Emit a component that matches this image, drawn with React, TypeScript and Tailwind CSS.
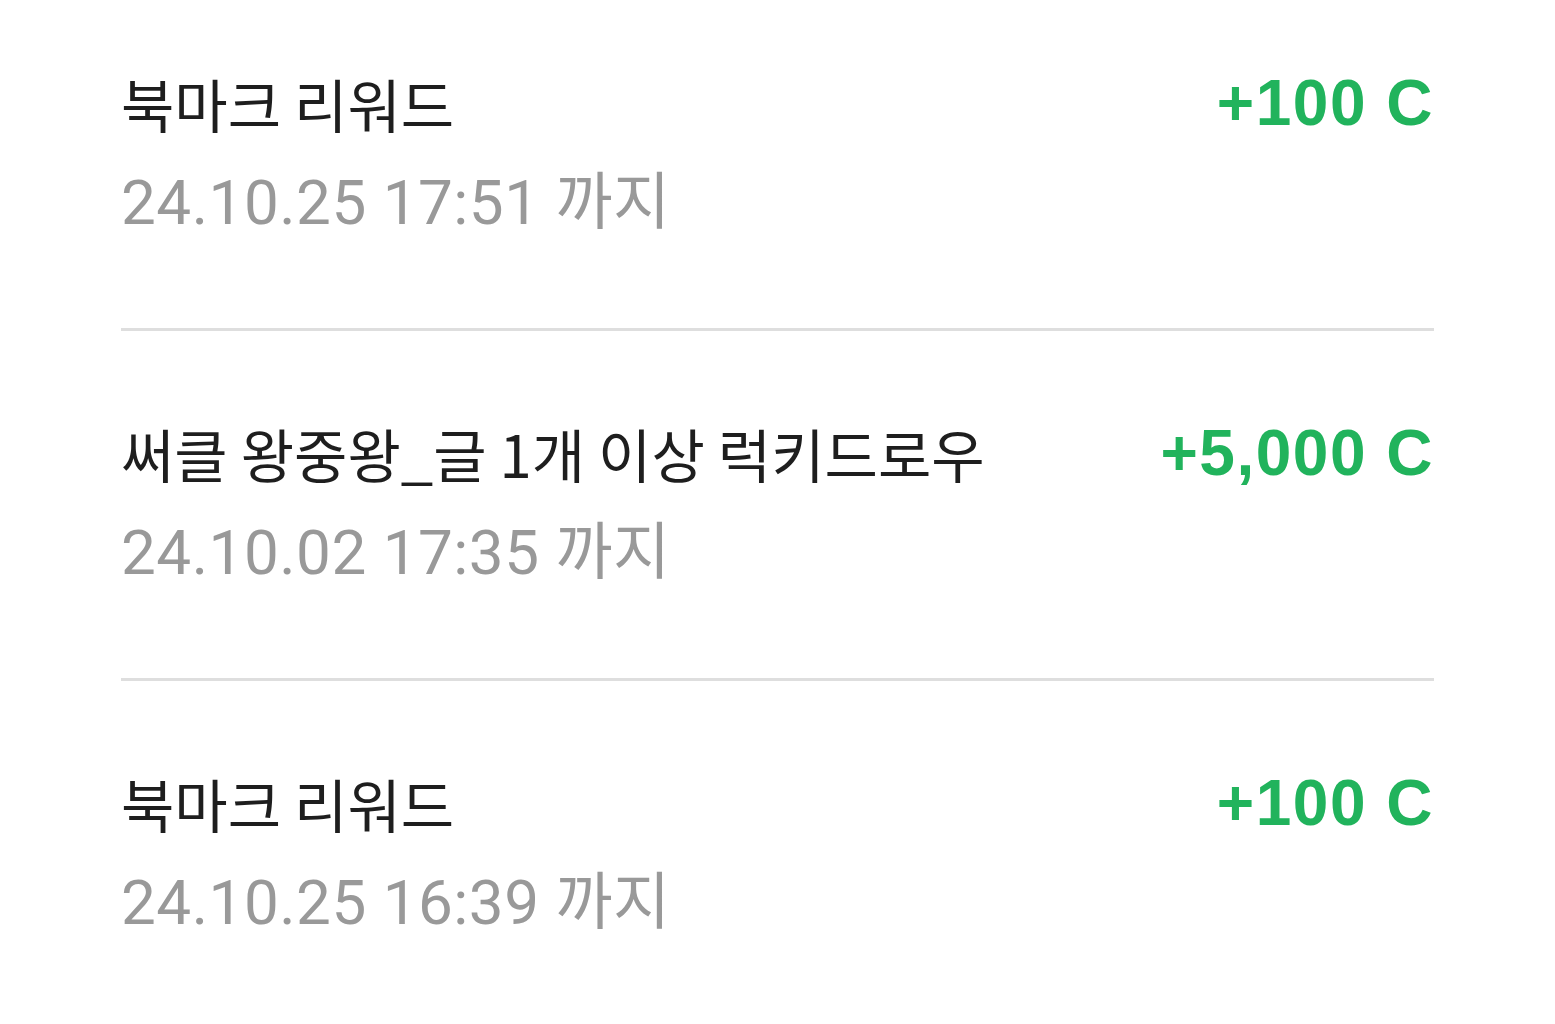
const rewards = [
  { title: "북마크 리워드", until: "24.10.25 17:51", amount: "+100 C" },
  { title: "써클 왕중왕_글 1개 이상 럭키드로우", until: "24.10.02 17:35", amount: "+5,000 C" },
  { title: "북마크 리워드", until: "24.10.25 16:39", amount: "+100 C" },
];

export default function App() {
  return (
    <div className="min-h-screen w-full bg-white px-[121px]">
      <ul>
        {rewards.map((r, i) => (
          <li
            key={i}
            className={
              i === 0
                ? "flex justify-between pt-[68px] pb-[90px] border-b-[3px] border-[#dedede]"
                : i === rewards.length - 1
                ? "flex justify-between pt-[87px] pb-[90px]"
                : "flex justify-between pt-[87px] pb-[90px] border-b-[3px] border-[#dedede]"
            }
          >
            <div className="flex flex-col gap-[30px]">
              {/* title */}
              <div className="h-[70px] leading-[70px] text-[58px] text-[#1e1e1e] font-['Noto_Sans_CJK_KR',sans-serif]">
                {r.title}
              </div>
              {/* date */}
              <div className="h-[70px] leading-[70px] text-[62px] tracking-[0.5px] text-[#999999] font-['Roboto','Noto_Sans_CJK_KR',sans-serif]">
                {r.until} 까지
              </div>
            </div>
            <div className="h-[70px] leading-[70px] text-[64px] font-bold tracking-[1.5px] text-[#21b35c] font-['Liberation_Sans',sans-serif]">
              {r.amount}
            </div>
          </li>
        ))}
      </ul>
    </div>
  );
}
